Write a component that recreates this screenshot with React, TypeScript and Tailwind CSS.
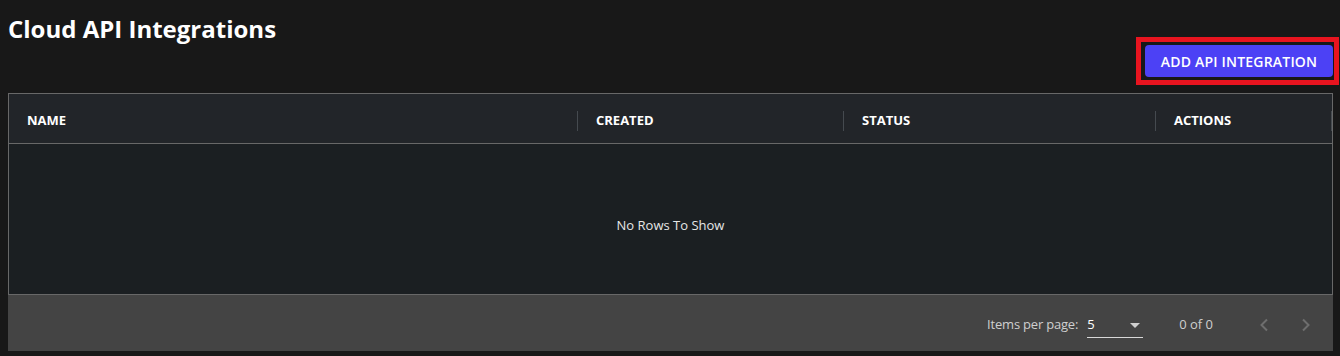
import React from "react";

const columns = [
  { label: "NAME", width: "w-[568px]" },
  { label: "CREATED", width: "w-[265px]" },
  { label: "STATUS", width: "w-[311px]" },
  { label: "ACTIONS", width: "flex-1" },
];

function Chevron({ dir }: { dir: "left" | "right" }) {
  return (
    <svg width="16" height="16" viewBox="0 0 16 16" fill="none">
      <path
        d={dir === "left" ? "M10 2.5 L4.5 8 L10 13.5" : "M6 2.5 L11.5 8 L6 13.5"}
        stroke="#6e6e6e"
        strokeWidth="2"
      />
    </svg>
  );
}

export default function App() {
  return (
    <div className="min-h-screen bg-[#181818] pl-2 pr-[7px] pt-2 font-['Open_Sans',sans-serif]">
      {/* ── 상단 타이틀 / 버튼 ── */}
      <div className="flex items-start justify-between">
        <h1 className="mt-[5px] text-[24px] leading-[32px] font-bold text-white">
          Cloud API Integrations
        </h1>
        <div className="relative mt-[37px]">
          <button className="h-8 w-[188px] rounded bg-[#4c41f5] text-[14px] font-semibold text-white tracking-[0.2px]">
            ADD API INTEGRATION
          </button>
          {/* 강조 표시 박스 */}
          <span className="pointer-events-none absolute -left-[9px] -right-[6px] -top-2 -bottom-2 border-[5px] border-[#e8141f]" />
        </div>
      </div>

      {/* ── 그리드 ── */}
      <div className="mt-4">
        <div className="border border-[#686868] bg-[#1b1f22]">
          <div className="flex h-[50px] items-center border-b border-[#686868] bg-[#222529] pt-1">
            {columns.map((col, i) => (
              <React.Fragment key={col.label}>
                <div
                  className={`${col.width} pl-[18px] text-[13px] font-bold text-white`}
                >
                  {col.label}
                </div>
                {i < columns.length && (
                  <div className="h-5 w-px bg-[#454a4f]" />
                )}
              </React.Fragment>
            ))}
          </div>
          <div className="flex h-[150px] items-center justify-center pt-[14px] text-[13px] text-[#e6e6e6]">
            No Rows To Show
          </div>
        </div>

        {/* ── 페이지네이션 ── */}
        <div className="flex h-14 items-center justify-end bg-[#444444] pr-2 pt-1 text-[13px] text-[#cfcfcf]">
          <span className="tracking-[-0.2px]">Items per page:</span>
          <div className="ml-[9px] flex w-14 items-center justify-between border-b border-[#d8d8d8] pb-[2px] pt-[3px]">
            <span className="text-white">5</span>
            <span className="mr-[3px] h-0 w-0 border-x-[5px] border-t-[5px] border-x-transparent border-t-[#cfcfcf]" />
          </div>
          <span className="ml-9">0 of 0</span>
          <div className="ml-8 flex">
            <button className="flex h-10 w-10 items-center justify-center">
              <Chevron dir="left" />
            </button>
            <button className="flex h-10 w-10 items-center justify-center">
              <Chevron dir="right" />
            </button>
          </div>
        </div>
      </div>
    </div>
  );
}
